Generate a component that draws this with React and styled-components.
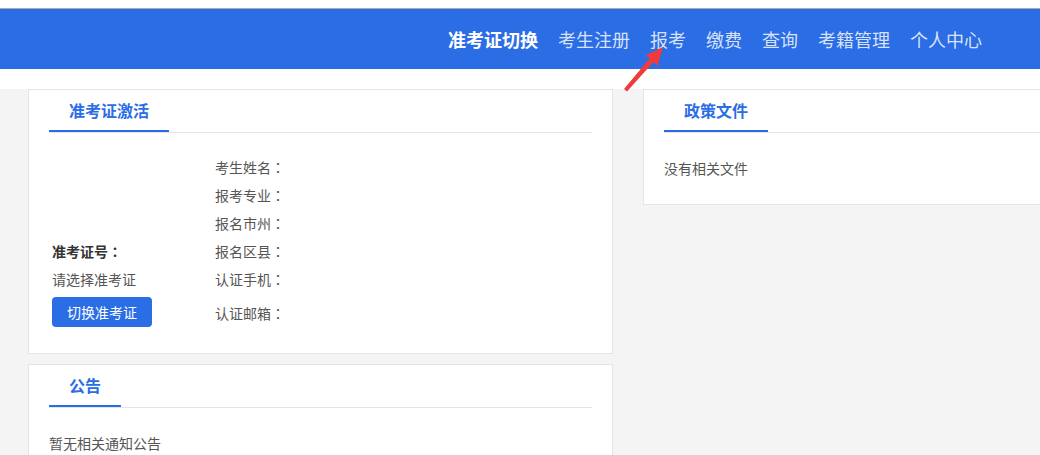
import React from "react";
import styled, { createGlobalStyle } from "styled-components";

const BLUE = "#2b6de5";

const GlobalStyle = createGlobalStyle`
  html, body {
    margin: 0;
    padding: 0;
    background: #ffffff;
    overflow: hidden;
  }
  body {
    font-family: "Noto Sans CJK SC", "Noto Sans", "Liberation Sans", sans-serif;
    width: 1040px;
    height: 455px;
  }
  * { box-sizing: border-box; }
`;

const Page = styled.div`
  position: relative;
  width: 1040px;
  height: 455px;
  overflow: hidden;
  background: #ffffff;
`;

const TopStrip = styled.div`
  height: 9px;
  background: #ffffff;
  border-bottom: 1px solid #a8a8a8;
`;

const Header = styled.header`
  height: 60px;
  background: ${BLUE};
  display: flex;
  justify-content: flex-end;
  align-items: center;
  padding-right: 58px;
  margin-bottom: 20px;
`;

const Nav = styled.nav`
  display: flex;
  align-items: center;
  gap: 20px;
`;

const NavItem = styled.a`
  font-size: 18px;
  line-height: 60px;
  white-space: nowrap;
  text-decoration: none;
  cursor: pointer;
  color: ${(p) => (p.$active ? "#ffffff" : "rgba(255,255,255,0.82)")};
  font-weight: ${(p) => (p.$active ? 700 : 400)};
`;

const Main = styled.main`
  background: #f4f4f4;
  height: 366px;
  padding-left: 28px;
  display: grid;
  grid-template-columns: 585px 585px;
  column-gap: 30px;
  align-items: start;
`;

const Column = styled.div`
  display: flex;
  flex-direction: column;
  gap: 10px;
`;

const Card = styled.section`
  background: #ffffff;
  border: 1px solid #e5e5e5;
`;

const CardHeader = styled.div`
  margin: 0 20px;
  display: flex;
  border-bottom: 1px solid #e4e4e4;
`;

const Tab = styled.div`
  padding: 0 20px;
  height: 42px;
  line-height: 40px;
  font-size: 16px;
  font-weight: 700;
  color: ${BLUE};
  border-bottom: 2px solid ${BLUE};
`;

const ActivateBody = styled.div`
  display: flex;
  align-items: flex-end;
  padding: 20px 20px 26px;
`;

const LeftCol = styled.div`
  width: 163px;
  margin-left: 3px;
  display: flex;
  flex-direction: column;
  align-items: flex-start;
`;

const FieldLabel = styled.div`
  font-size: 14px;
  line-height: 28px;
  font-weight: 700;
  color: #333333;
`;

const PlainText = styled.div`
  font-size: 14px;
  line-height: 28px;
  color: #555555;
`;

const Colon = styled.span`
  font-family: "Noto Sans CJK TC", "Noto Sans CJK SC", sans-serif;
`;

const SwitchButton = styled.button`
  margin-top: 4px;
  width: 100px;
  height: 30px;
  border: none;
  border-radius: 4px;
  background: ${BLUE};
  color: #ffffff;
  font-family: inherit;
  font-size: 14px;
  padding: 0;
  cursor: pointer;
`;

const InfoList = styled.div`
  display: flex;
  flex-direction: column;
`;

const InfoRow = styled.div`
  font-size: 14px;
  line-height: 28px;
  color: #555555;
  margin-top: ${(p) => (p.$spaced ? "6px" : "0")};
`;

const TextBody = styled.div`
  padding: 25px 20px 26px;
  font-size: 14px;
  line-height: 20px;
  color: #555555;
`;

const Arrow = styled.svg`
  position: absolute;
  left: 620px;
  top: 42px;
  width: 50px;
  height: 55px;
  pointer-events: none;
`;

const navItems = ["考生注册", "报考", "缴费", "查询", "考籍管理", "个人中心"];
const infoLabels = ["考生姓名", "报考专业", "报名市州", "报名区县", "认证手机"];

export default function App() {
  return (
    <Page>
      <GlobalStyle />
      <TopStrip />
      <Header>
        <Nav>
          <NavItem $active>准考证切换</NavItem>
          {navItems.map((n) => (
            <NavItem key={n}>{n}</NavItem>
          ))}
        </Nav>
      </Header>
      <Main>
        <Column>
          <Card>
            <CardHeader>
              <Tab>准考证激活</Tab>
            </CardHeader>
            <ActivateBody>
              <LeftCol>
                <FieldLabel>
                  准考证号<Colon>：</Colon>
                </FieldLabel>
                <PlainText>请选择准考证</PlainText>
                <SwitchButton>切换准考证</SwitchButton>
              </LeftCol>
              <InfoList>
                {infoLabels.map((l) => (
                  <InfoRow key={l}>
                    {l}
                    <Colon>：</Colon>
                  </InfoRow>
                ))}
                <InfoRow $spaced>
                  认证邮箱<Colon>：</Colon>
                </InfoRow>
              </InfoList>
            </ActivateBody>
          </Card>
          <Card>
            <CardHeader>
              <Tab>公告</Tab>
            </CardHeader>
            <TextBody>暂无相关通知公告</TextBody>
          </Card>
        </Column>
        <Column>
          <Card>
            <CardHeader>
              <Tab>政策文件</Tab>
            </CardHeader>
            <TextBody>没有相关文件</TextBody>
          </Card>
        </Column>
      </Main>
      <Arrow viewBox="620 42 50 55">
        <polygon
          points="663,47 657.5,66 653.5,62 627,91.5 624,89 650,58 645.5,55.5"
          fill="#f23a3a"
        />
      </Arrow>
    </Page>
  );
}
